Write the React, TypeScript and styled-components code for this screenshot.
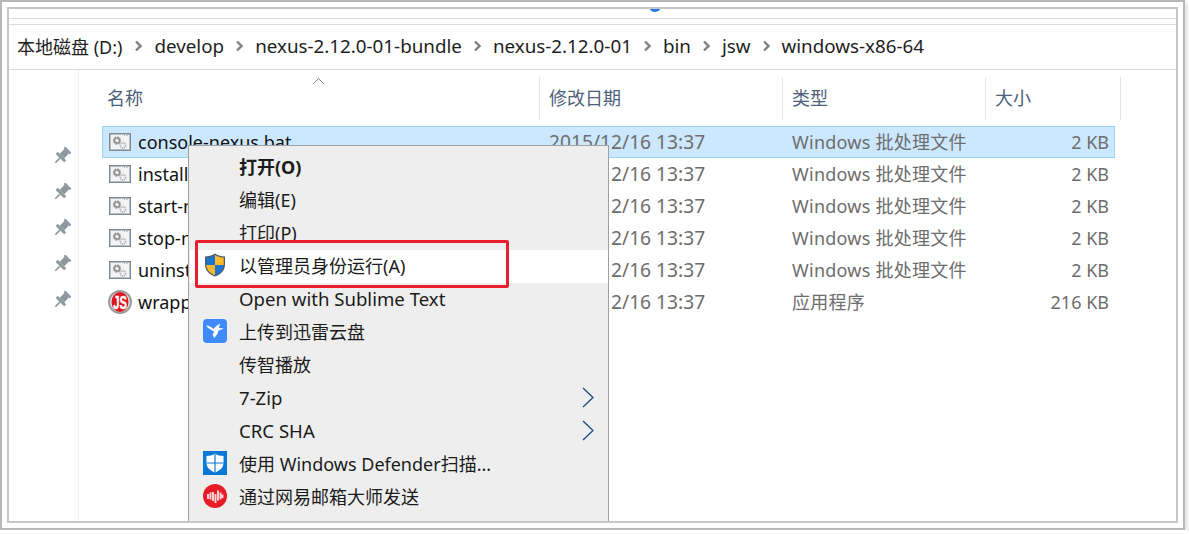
import { Fragment } from "react";
import styled, { createGlobalStyle } from "styled-components";

const GlobalStyle = createGlobalStyle`
  html, body {
    margin: 0;
    padding: 0;
    background: #ffffff;
  }
  body {
    font-family: "Noto Sans", "Noto Sans CJK SC", sans-serif;
    font-size: 18px;
  }
`;

const Frame = styled.div`
  box-sizing: border-box;
  width: 1185px;
  height: 530px;
  padding: 5px;
  border: 2px solid #b8b8b8;
  box-shadow: 2px 2px 5px rgba(0, 0, 0, 0.14);
`;

const Explorer = styled.div`
  position: relative;
  box-sizing: border-box;
  height: 100%;
  border: 2px solid #c6c6c6;
  overflow: hidden;
  background: #ffffff;
`;

const TopStrip = styled.div`
  position: relative;
  height: 9px;
  border-bottom: 1px solid #dcdcdc;
`;

const BlueDot = styled.span`
  position: absolute;
  left: 640px;
  top: -9px;
  width: 12px;
  height: 12px;
  border-radius: 50%;
  background: #1e78e6;
`;

const TabStrip = styled.div`
  height: 5px;
  border-bottom: 1px solid #dcdcdc;
`;

const Breadcrumb = styled.div`
  box-sizing: content-box;
  display: flex;
  align-items: center;
  gap: 12px;
  height: 42px;
  padding: 0 0 2px 8px;
  border-bottom: 1px solid #d9d9d9;
  color: #1e1e1e;
`;

const Crumb = styled.span<{ $latin?: boolean }>`
  margin-right: ${(p) => (p.$latin ? 0 : 1)}px;
  font-size: ${(p) => (p.$latin ? 18.8 : 18)}px;
`;

const Body = styled.div`
  display: flex;
  height: 452px;
`;

const Sidebar = styled.div`
  box-sizing: border-box;
  display: flex;
  flex-direction: column;
  gap: 18px;
  width: 70px;
  padding: 77px 0 0 44px;
  border-right: 1px solid #f0f0f0;
`;

const Files = styled.div`
  flex: 1;
  padding-top: 7px;
`;

const Header = styled.div`
  display: grid;
  grid-template-columns: 461px 243px 203px 135px;
  height: 40px;
`;

const HeaderCell = styled.div<{ $first?: boolean }>`
  position: relative;
  box-sizing: border-box;
  padding-left: ${(p) => (p.$first ? 28 : 9)}px;
  border-right: 1px solid #e5e5e5;
  color: #4c607a;
  line-height: 43px;
`;

const SortArrow = styled.svg`
  position: absolute;
  left: 233px;
  top: 0;
`;

const Rows = styled.div`
  margin: 9px 0 0 23px;
  width: 1013px;
`;

const Row = styled.div<{ $selected?: boolean }>`
  box-sizing: border-box;
  display: grid;
  grid-template-columns: 437px 243px 203px 1fr;
  align-items: center;
  height: 32px;
  border: 1px solid ${(p) => (p.$selected ? "#99d1ff" : "transparent")};
  background: ${(p) => (p.$selected ? "#cce8ff" : "transparent")};
`;

const NameCell = styled.div`
  display: flex;
  align-items: center;
  gap: 6px;
  padding-left: 5px;
  color: #111111;
`;

const IconSlot = styled.span`
  display: flex;
  align-items: center;
  justify-content: center;
  width: 24px;
  height: 24px;
  flex: none;
`;

const DateCell = styled.div`
  padding: 0 0 2px 9px;
  color: #6d6d6d;
  font-size: 19.2px;
`;

const TypeCell = styled.div`
  padding: 0 0 2px 9px;
  color: #6d6d6d;
  letter-spacing: 0.25px;
`;

const SizeCell = styled.div`
  padding-right: 5px;
  color: #6d6d6d;
  text-align: right;
`;

const Menu = styled.div`
  position: absolute;
  left: 179px;
  top: 136px;
  box-sizing: border-box;
  width: 421px;
  height: 420px;
  padding: 5px 0 0 1px;
  border: 1px solid #a0a0a0;
  background: #eeeeee;
`;

const MenuItem = styled.div<{ $active?: boolean; $bold?: boolean; $latin?: boolean }>`
  position: relative;
  box-sizing: border-box;
  display: flex;
  align-items: center;
  gap: 12px;
  height: 33px;
  padding: 0 0 ${(p) => (p.$latin ? 2 : 4)}px 13px;
  background: ${(p) => (p.$active ? "#ffffff" : "transparent")};
  color: #1b1b1b;
  font-size: ${(p) => (p.$latin ? 18.6 : 18)}px;
  font-weight: ${(p) => (p.$bold ? 700 : 400)};
`;

const SubArrow = styled.svg`
  position: absolute;
  right: 14px;
  top: 5px;
`;

const RedMark = styled.div`
  position: absolute;
  left: 186px;
  top: 231px;
  box-sizing: border-box;
  width: 314px;
  height: 48px;
  border: 3px solid #e8202e;
  border-radius: 2px;
`;

const Chevron = () => (
  <svg width="7" height="12" viewBox="0 0 7 12">
    <path d="M1 1.500 5.500 6 1 10.500" fill="none" stroke="#808080" strokeWidth="2.400" />
  </svg>
);

const Pin = () => (
  <svg width="18" height="18" viewBox="0 0 18 18">
    <g transform="rotate(45 9 9)" fill="#8d979e">
      <rect x="4.500" y="0" width="9" height="2.200" />
      <rect x="5.800" y="2" width="6.400" height="7" />
      <rect x="3" y="9" width="12" height="3" />
      <rect x="8.200" y="12" width="1.600" height="6.500" />
    </g>
  </svg>
);

const BatIcon = () => (
  <svg width="22" height="18" viewBox="0 0 22 18">
    <rect x="0.750" y="0.750" width="20.500" height="16.500" fill="#f4f4f4" stroke="#7f8a93" strokeWidth="1.500" />
    <path d="M15 2.500h1m1.500 0h1" stroke="#9aa3aa" strokeWidth="1" />
    <circle cx="8" cy="7.500" r="3" fill="none" stroke="#9a9a9a" strokeWidth="2.400" strokeDasharray="1.500 0.800" />
    <circle cx="8" cy="7.500" r="2.600" fill="none" stroke="#8c8c8c" strokeWidth="1.200" />
    <circle cx="14" cy="12.500" r="2.600" fill="none" stroke="#a4b0b8" strokeWidth="1.600" strokeDasharray="1.200 0.700" />
  </svg>
);

const JsIcon = () => (
  <svg width="24" height="24" viewBox="0 0 24 24">
    <circle cx="12" cy="12" r="12" fill="#9c9c9c" />
    <circle cx="12" cy="12" r="10" fill="#e0e0e0" />
    <ellipse cx="12" cy="12" rx="8.500" ry="10" fill="#e0141c" />
    <g transform="translate(12 18.500) scale(0.8 1.250)">
      <text
        x="0"
        y="0"
        textAnchor="middle"
        fontFamily="Liberation Sans"
        fontWeight="700"
        fontSize="14"
        fill="#ffffff"
        stroke="#ffffff"
        strokeWidth="0.300"
      >
        JS
      </text>
    </g>
  </svg>
);

const ShieldIcon = () => (
  <svg width="24" height="24" viewBox="0 0 24 24">
    <path d="M12 .5c2.500 2 6 3 10 3v8c0 6-4.500 10-10 12C6.500 21.500 2 17.500 2 11.500v-8c4 0 7.500-1 10-3z" fill="#4d5a66" />
    <path d="M12 2v10H3.300V4.600C6.800 4.500 9.700 3.600 12 2z" fill="#1b75d0" />
    <path d="M12 2c2.300 1.600 5.200 2.500 8.700 2.600V12H12z" fill="#fdb92e" />
    <path d="M3.300 12H12v10.200C7 20.300 3.500 17 3.300 12z" fill="#fdb92e" />
    <path d="M12 12h8.700c-.2 5-3.700 8.300-8.700 10.200z" fill="#1b75d0" />
  </svg>
);

const ThunderIcon = () => (
  <svg width="24" height="24" viewBox="0 0 24 24">
    <rect width="24" height="24" rx="4" fill="#3d8bff" />
    <path d="M3 6.500c3 .2 5.500 1.500 7.500 3.500 1.500-2 3.500-4 7-5.500-1 2-1.500 3-1.500 4.500l5 .5-5.500 2c-.5 3-2.500 5.500-4.500 7.500-.3-1.500-.8-2.500-1.500-3.500 1-1 1.500-2 1.500-3C8 10.500 5 9.500 3 6.500z" fill="#ffffff" />
  </svg>
);

const DefenderIcon = () => (
  <svg width="24" height="24" viewBox="0 0 24 24">
    <rect width="24" height="24" fill="#0a78d7" />
    <path d="M12 2.500c2.500 1.800 5.500 2.500 8.500 2.500v7c0 4.500-3.500 7.500-8.500 9.500C7 19.500 3.500 16.500 3.500 12V5c3 0 6-.7 8.500-2.500z" fill="#ffffff" />
    <path d="M12 2.500v19M3.500 12h17" stroke="#0a78d7" strokeWidth="1.200" />
  </svg>
);

const MailMasterIcon = () => (
  <svg width="24" height="24" viewBox="0 0 24 24">
    <circle cx="12" cy="12" r="12" fill="#e81c26" />
    <path d="M5 10v5M7.500 8.500v7M10 8v9M12.500 10v9M15 6.500v10M17.500 8.500v7M19.500 10.500v3.500" stroke="#ffd9d9" strokeWidth="1.900" fill="none" />
  </svg>
);

const crumbs = [
  "本地磁盘 (D:)",
  "develop",
  "nexus-2.12.0-01-bundle",
  "nexus-2.12.0-01",
  "bin",
  "jsw",
  "windows-x86-64",
];

const files = [
  { name: "console-nexus.bat", type: "Windows 批处理文件", size: "2 KB" },
  { name: "install-nexus.bat", type: "Windows 批处理文件", size: "2 KB" },
  { name: "start-nexus.bat", type: "Windows 批处理文件", size: "2 KB" },
  { name: "stop-nexus.bat", type: "Windows 批处理文件", size: "2 KB" },
  { name: "uninstall-nexus.bat", type: "Windows 批处理文件", size: "2 KB" },
  { name: "wrapper.exe", type: "应用程序", size: "216 KB" },
];

const menuItems = [
  { label: "打开(O)", bold: true },
  { label: "编辑(E)" },
  { label: "打印(P)" },
  { label: "以管理员身份运行(A)", icon: <ShieldIcon />, active: true },
  { label: "Open with Sublime Text", latin: true },
  { label: "上传到迅雷云盘", icon: <ThunderIcon /> },
  { label: "传智播放" },
  { label: "7-Zip", sub: true, latin: true },
  { label: "CRC SHA", sub: true, latin: true },
  { label: "使用 Windows Defender扫描...", icon: <DefenderIcon /> },
  { label: "通过网易邮箱大师发送", icon: <MailMasterIcon /> },
];

const App = () => {
  return (
    <>
      <GlobalStyle />
      <Frame>
        <Explorer>
          <TopStrip>
            <BlueDot />
          </TopStrip>
          <TabStrip />
          <Breadcrumb>
            {crumbs.map((crumb, i) => (
              <Fragment key={crumb}>
                {i > 0 && <Chevron />}
                <Crumb $latin={i > 0}>{crumb}</Crumb>
              </Fragment>
            ))}
          </Breadcrumb>
          <Body>
            <Sidebar>
              <Pin />
              <Pin />
              <Pin />
              <Pin />
              <Pin />
            </Sidebar>
            <Files>
              <Header>
                <HeaderCell $first>
                  名称
                  <SortArrow width="13" height="8" viewBox="0 0 13 8">
                    <path d="M1 7l5.500-5.500L12 7" fill="none" stroke="#8a8a8a" strokeWidth="1" />
                  </SortArrow>
                </HeaderCell>
                <HeaderCell>修改日期</HeaderCell>
                <HeaderCell>类型</HeaderCell>
                <HeaderCell>大小</HeaderCell>
              </Header>
              <Rows>
                {files.map((file, i) => (
                  <Row key={file.name} $selected={i === 0}>
                    <NameCell>
                      <IconSlot>{file.name.endsWith(".exe") ? <JsIcon /> : <BatIcon />}</IconSlot>
                      <span>{file.name}</span>
                    </NameCell>
                    <DateCell>2015/12/16 13:37</DateCell>
                    <TypeCell>{file.type}</TypeCell>
                    <SizeCell>{file.size}</SizeCell>
                  </Row>
                ))}
              </Rows>
            </Files>
          </Body>
          <Menu>
            {menuItems.map((item) => (
              <MenuItem key={item.label} $active={item.active} $bold={item.bold} $latin={item.latin}>
                <IconSlot>{item.icon}</IconSlot>
                <span>{item.label}</span>
                {item.sub && (
                  <SubArrow width="12" height="21" viewBox="0 0 12 21">
                    <path d="M1 1l10 9.500L1 20" fill="none" stroke="#1d4a86" strokeWidth="1.300" />
                  </SubArrow>
                )}
              </MenuItem>
            ))}
          </Menu>
          <RedMark />
        </Explorer>
      </Frame>
    </>
  );
};

export default App;
